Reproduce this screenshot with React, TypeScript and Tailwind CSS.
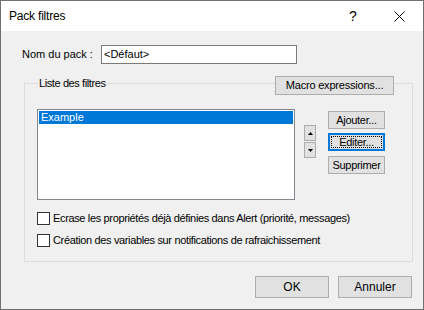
import React from "react";

const btn =
  "flex items-center justify-center bg-[#e1e1e1] border border-[#adadad] text-[11px] text-black leading-none";

function Checkbox({ label }: { label: string }) {
  return (
    <div className="flex items-center h-[13px]">
      <div className="w-[13px] h-[13px] border border-[#333333] bg-white shrink-0" />
      <span className="ml-[3px] text-[11px] leading-none tracking-[-0.35px] text-black whitespace-nowrap">
        {label}
      </span>
    </div>
  );
}

export default function App() {
  return (
    <div
      className="w-[424px] h-[310px] border border-[#707070] bg-[#f0f0f0] flex flex-col overflow-hidden"
      style={{ fontFamily: '"Liberation Sans", Arial, sans-serif' }}
    >
      {/* Title bar */}
      <div className="h-[30px] bg-white flex items-center shrink-0">
        <span className="ml-[8px] text-[12px] text-black tracking-[-0.2px]">Pack filtres</span>
        <span className="ml-auto w-[46px] flex justify-center text-[14px] text-black">?</span>
        <span className="w-[46px] mr-[1px] flex justify-center">
          <svg width="11" height="11" viewBox="0 0 11 11">
            <path d="M0.5 0.5 L10.5 10.5 M10.5 0.5 L0.5 10.5" stroke="#000" strokeWidth="1" />
          </svg>
        </span>
      </div>

      {/* Name row */}
      <div className="flex items-center mt-[14px] pl-[21px]">
        <span className="text-[11px] text-black w-[79px] whitespace-nowrap">Nom du pack :</span>
        <div className="w-[196px] h-[19px] bg-white border border-[#7a7a7a] flex items-center pl-[2px] text-[11px] text-black">
          &lt;Défaut&gt;
        </div>
      </div>

      {/* Group box */}
      <div className="relative ml-[23px] mt-[19px] w-[389px] h-[179px] border border-[#dcdcdc]">
        <span className="absolute left-[13px] top-[-8px] px-[1px] bg-[#f0f0f0] text-[11px] leading-[14px] tracking-[-0.4px] text-black">
          Liste des filtres
        </span>
        <div className={`absolute left-[250px] top-[-8px] w-[119px] h-[19px] tracking-[-0.2px] ${btn}`}>
          Macro expressions...
        </div>

        <div className="flex mt-[25px] ml-[12px]">
          {/* List */}
          <div className="w-[258px] h-[91px] bg-white border border-[#828790] p-[1px]">
            <div className="h-[13px] bg-[#0078d7] text-white text-[11px] leading-[13px] pl-[2px]">Example</div>
          </div>

          {/* Up / down */}
          <div className="flex flex-col gap-[1px] ml-[9px] mt-[16px]">
            <div className={`w-[12px] h-[16px] ${btn}`}>
              <svg width="5" height="3" viewBox="0 0 5 3">
                <path d="M2.5 0 L5 3 L0 3 Z" fill="#000" />
              </svg>
            </div>
            <div className={`w-[12px] h-[16px] ${btn}`}>
              <svg width="5" height="3" viewBox="0 0 5 3">
                <path d="M0 0 L5 0 L2.5 3 Z" fill="#000" />
              </svg>
            </div>
          </div>

          {/* Action buttons */}
          <div className="flex flex-col ml-[12px] mt-[2px]">
            <div className={`w-[57px] h-[18px] tracking-[-0.3px] ${btn}`}>Ajouter...</div>
            <div className="w-[57px] h-[18px] mt-[4px] bg-[#e1e1e1] border-2 border-[#0078d7] p-[1px]">
              <div className="w-full h-full border border-dotted border-black flex items-center justify-center text-[11px] leading-none tracking-[-0.3px] text-black">
                Editer...
              </div>
            </div>
            <div className={`w-[57px] h-[18px] mt-[5px] tracking-[-0.3px] ${btn}`}>Supprimer</div>
          </div>
        </div>

        <div className="flex flex-col gap-[9px] ml-[12px] mt-[12px]">
          <Checkbox label="Ecrase les propriétés déjà définies dans Alert (priorité, messages)" />
          <Checkbox label="Création des variables sur notifications de rafraichissement" />
        </div>
      </div>

      {/* Bottom buttons */}
      <div className="flex justify-end gap-[9px] mt-[14px] pr-[11px]">
        <div className={`w-[74px] h-[22px] ${btn} text-[12px]`}>OK</div>
        <div className={`w-[74px] h-[22px] ${btn} text-[12px]`}>Annuler</div>
      </div>
    </div>
  );
}
